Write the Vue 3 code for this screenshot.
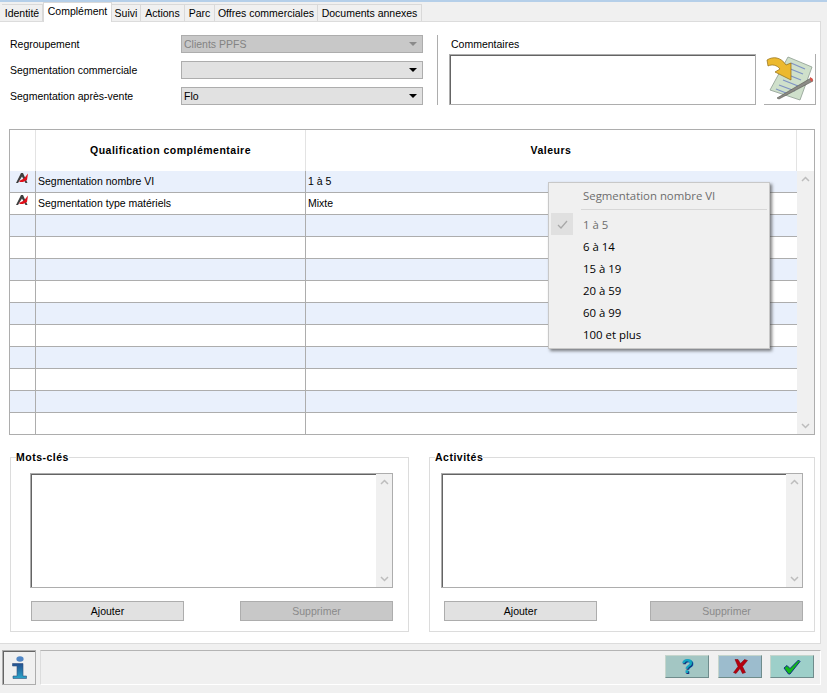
<template>
  <div class="window">
    <div class="tabs">
      <span v-for="tab in tabs" :key="tab.label" class="tab" :class="{ active: tab.active }" :style="{ width: tab.width + 'px' }">{{ tab.label }}</span>
    </div>

    <div class="panel">
      <div class="top">
        <div class="fields">
          <div v-for="f in fields" :key="f.label" class="field">
            <label>{{ f.label }}</label>
            <div class="select" :class="{ disabled: f.disabled }">
              <span>{{ f.value }}</span>
              <i class="caret"></i>
            </div>
          </div>
        </div>
        <div class="comments">
          <div class="comments-label">Commentaires</div>
          <div class="comments-row">
            <div class="inset comments-box"></div>
            <button class="note-btn">
              <svg width="51" height="50" viewBox="0 0 51 50">
                <path d="M24 3 L48 13 L36 46 L6 36 Z" fill="#cfe0cb" stroke="#8d9c90" stroke-width=".8" />
                <path d="M27 9l14 6M24 14l15 6M22 20l15 6M19 26l15 6M15 31l16 6M12 35l10 4" stroke="#7f93c4" stroke-width="1.3" />
                <path d="M3 6 C9 2 17 3 22 11 L27 9 L27 26 L11 18 L16 15 C13 11 8 10 4 12 Z" fill="#ecb92f" stroke="#8f6c14" stroke-width=".7" />
                <path d="M13 44 L47 24 L49 27 L15 45 Z" fill="#8b8b86" stroke="#55554f" stroke-width=".6" />
                <path d="M46 23l3 2-1 3-2-2z" fill="#d9534a" />
              </svg>
            </button>
          </div>
        </div>
      </div>

      <div class="grid">
        <div class="grid-head">
          <div class="cell"></div>
          <div class="cell title">Qualification complémentaire</div>
          <div class="cell title">Valeurs</div>
          <div class="cell corner"></div>
        </div>
        <div class="grid-body">
          <div class="rows">
            <div v-for="(r, i) in rows" :key="i" class="row" :class="{ odd: i % 2 === 0 }">
              <div class="cell icon-cell">
                <svg v-if="r.name" width="14" height="13" viewBox="0 0 14 13">
                  <path d="M1 11 L6 1 L8 1 L12.5 11 L10.5 11 L7 4.5 L3 11 Z" fill="#3f3f3f" />
                  <path d="M4 9 L9 6.5 L13 1.5 L12 8 L8 10 L5 10 Z" fill="#e0101a" />
                </svg>
              </div>
              <div class="cell">{{ r.name }}</div>
              <div class="cell">{{ r.value }}</div>
            </div>
          </div>
          <div class="scrollbar">
            <svg class="chev" width="9" height="6" viewBox="0 0 9 6"><path d="M1 5 L4.5 1.5 L8 5" /></svg>
            <svg class="chev" width="9" height="6" viewBox="0 0 9 6"><path d="M1 1 L4.5 4.5 L8 1" /></svg>
          </div>
        </div>

        <div class="menu">
          <div class="menu-title">Segmentation nombre VI</div>
          <div class="menu-sep"></div>
          <div v-for="(m, i) in menuItems" :key="m" class="menu-item" :class="{ checked: i === 0 }">
            <span class="check">
              <svg v-if="i === 0" width="11" height="9" viewBox="0 0 11 9"><path d="M1 5 L4 8 L10 1" fill="none" stroke="#a8a8a8" stroke-width="1.3" /></svg>
            </span>
            <span>{{ m }}</span>
          </div>
        </div>
      </div>

      <div class="groups">
        <fieldset v-for="g in groups" :key="g.title" class="group" :class="g.cls">
          <legend>{{ g.title }}</legend>
          <div class="inset list">
            <div class="scrollbar list-bar">
              <svg class="chev" width="9" height="6" viewBox="0 0 9 6"><path d="M1 5 L4.5 1.5 L8 5" /></svg>
              <svg class="chev" width="9" height="6" viewBox="0 0 9 6"><path d="M1 1 L4.5 4.5 L8 1" /></svg>
            </div>
          </div>
          <div class="group-actions">
            <button class="btn">Ajouter</button>
            <button class="btn off">Supprimer</button>
          </div>
        </fieldset>
      </div>
    </div>

    <div class="footer">
      <button class="info-btn">
        <svg width="15" height="23" viewBox="0 0 15 23">
          <defs>
            <linearGradient id="infoBody" x1="0" y1="0" x2="0" y2="1">
              <stop offset="0" stop-color="#234f8f" />
              <stop offset="1" stop-color="#2aa5c9" />
            </linearGradient>
          </defs>
          <ellipse cx="8" cy="3" rx="3.6" ry="2.8" fill="#4f86c6" />
          <path d="M.5 7.5 H11 V20 H14.5 V22.5 H1 V20 H5 V10 H.5 Z" fill="url(#infoBody)" stroke="#34507c" stroke-width=".6" />
        </svg>
      </button>
      <div class="status">
        <button class="act help">?</button>
        <button class="act cancel">
          <svg width="15" height="15" viewBox="0 0 15 15"><path d="M2 .5 L5 .5 L7.5 4.5 L11.5 .5 L14.5 1.5 L9.5 7.5 L12.5 13.5 L9.5 14.5 L7 9.5 L3 14.5 L.5 13.5 L5 7.5 Z" fill="#b5000f" stroke="#7d0008" stroke-width=".5" /></svg>
        </button>
        <button class="act ok">
          <svg width="18" height="16" viewBox="0 0 18 16"><path d="M1 9 L4 6.5 L7 9.5 L15.5 1 L17 2.5 L7 15 L5.5 15 Z" fill="#12b81a" stroke="#0a1f8c" stroke-width=".9" /></svg>
        </button>
      </div>
    </div>
  </div>
</template>

<script setup>
const tabs = [
  { label: "Identité", width: 41 },
  { label: "Complément", width: 69, active: true },
  { label: "Suivi", width: 29 },
  { label: "Actions", width: 44 },
  { label: "Parc", width: 30 },
  { label: "Offres commerciales", width: 103 },
  { label: "Documents annexes", width: 104 },
];

const fields = [
  { label: "Regroupement", value: "Clients PPFS", disabled: true },
  { label: "Segmentation commerciale", value: "" },
  { label: "Segmentation après-vente", value: "Flo" },
];

const rows = Array.from({ length: 12 }, () => ({ name: "", value: "" }));
rows[0] = { name: "Segmentation nombre VI", value: "1 à 5" };
rows[1] = { name: "Segmentation type matériels", value: "Mixte" };

const menuItems = ["1 à 5", "6 à 14", "15 à 19", "20 à 59", "60 à 99", "100 et plus"];

const groups = [
  { title: "Mots-clés", cls: "left" },
  { title: "Activités", cls: "right" },
];
</script>

<style>
html,
body {
  margin: 0;
  background: #f0f0f0;
}
</style>

<style scoped>
.window {
  width: 827px;
  height: 693px;
  overflow: hidden;
  background: #f0f0f0;
  border-top: 2px solid #b5cfe9;
  box-sizing: border-box;
  font-family: "Liberation Sans", Arial, sans-serif;
  font-size: 10.5px;
  color: #000;
}

button {
  font: inherit;
  padding: 0;
  cursor: pointer;
}

.tabs {
  display: flex;
  height: 19px;
  padding-left: 2px;
  align-items: flex-end;
}

.tab {
  height: 17px;
  line-height: 17px;
  text-align: center;
  box-sizing: border-box;
  border: 1px solid #d9d9d9;
  border-left: 0;
  border-bottom: 0;
  white-space: nowrap;
}

.tab.active {
  height: 20px;
  line-height: 17px;
  background: #fff;
  border-left: 1px solid #d9d9d9;
  margin-bottom: -1px;
  position: relative;
  z-index: 1;
}

.panel {
  width: 821px;
  height: 623px;
  box-sizing: border-box;
  background: #fff;
  border: 1px solid #dcdcdc;
  border-left: 0;
}

.top {
  display: flex;
  padding: 13px 0 0 10px;
  height: 107px;
  box-sizing: border-box;
}

.fields {
  width: 413px;
  display: flex;
  flex-direction: column;
  gap: 8px;
  margin-right: 14px;
}

.field {
  display: flex;
  align-items: center;
  height: 18px;
}

.field label {
  width: 171px;
}

.select {
  flex: 1;
  height: 18px;
  box-sizing: border-box;
  background: #e1e1e1;
  border: 1px solid #adadad;
  display: flex;
  align-items: center;
  justify-content: space-between;
  padding: 0 5px 0 2px;
}

.select.disabled {
  background: #c8c8c8;
  color: #838383;
}

.caret {
  width: 0;
  height: 0;
  border-left: 4px solid transparent;
  border-right: 4px solid transparent;
  border-top: 4px solid #000;
}

.select.disabled .caret {
  border-top-color: #8a8a8a;
}

.comments {
  border-left: 1px solid #adadad;
  height: 70px;
  padding-left: 11px;
}

.comments-label {
  height: 19px;
  line-height: 18px;
  padding-left: 2px;
}

.comments-row {
  display: flex;
  gap: 8px;
}

.inset {
  box-sizing: border-box;
  background: #fff;
  border: 1px solid #adadad;
  box-shadow: inset 1px 1px 0 #646464;
}

.comments-box {
  width: 307px;
  height: 51px;
}

.note-btn {
  width: 52px;
  height: 51px;
  box-sizing: border-box;
  background: #fff;
  border: 0;
  border-right: 1px solid #adadad;
  border-bottom: 1px solid #adadad;
  display: flex;
  align-items: center;
  justify-content: center;
}

.grid {
  position: relative;
  margin: 0 0 0 9px;
  width: 806px;
  box-sizing: border-box;
  border: 1px solid #adadad;
}

.grid-head {
  display: grid;
  grid-template-columns: 26px 270px 491px 17px;
  height: 41px;
}

.grid-head .cell {
  border-right: 1px solid #e3e3e3;
}

.cell.title {
  font-weight: 700;
  text-align: center;
  line-height: 41px;
  letter-spacing: .5px;
}

.cell.corner {
  border-right: 0;
}

.grid-body {
  display: flex;
}

.rows {
  width: 787px;
}

.row {
  display: grid;
  grid-template-columns: 26px 270px 491px;
  height: 22px;
  box-sizing: border-box;
  border-bottom: 1px solid #adadad;
}

.row:last-child {
  height: 21px;
  border-bottom: 0;
}

.row.odd {
  background: #e9f0fc;
}

.row .cell {
  border-right: 1px solid #adadad;
  line-height: 21px;
  padding-left: 2px;
  box-sizing: border-box;
}

.row .cell:last-child {
  border-right: 0;
}

.icon-cell svg {
  display: block;
  margin: 1px 0 0 3px;
}

.scrollbar {
  width: 17px;
  background: #f0f0f0;
  display: flex;
  flex-direction: column;
  justify-content: space-between;
  align-items: center;
  padding: 5px 0;
  box-sizing: border-box;
}

.chev {
  fill: none;
  stroke: #bdbdbd;
  stroke-width: 1.5;
}

.menu {
  position: absolute;
  left: 538px;
  top: 52px;
  width: 222px;
  height: 167px;
  box-sizing: border-box;
  background: #f0f0f0;
  border: 1px solid #c8c8c8;
  box-shadow: 2px 2px 3px rgba(60, 60, 60, .65);
  padding: 2px;
  font-family: "Open Sans", "Noto Sans", sans-serif;
  font-size: 11.4px;
  z-index: 2;
}

.menu-title {
  height: 22px;
  line-height: 22px;
  padding-left: 32px;
  color: #6d6d6d;
}

.menu-sep {
  height: 1px;
  margin: 2px 0 3px 30px;
  background: #d7d7d7;
}

.menu-item {
  height: 22px;
  display: flex;
  align-items: center;
}

.menu-item.checked {
  color: #6d6d6d;
}

.check {
  width: 22px;
  height: 22px;
  margin-right: 10px;
  display: flex;
  align-items: center;
  justify-content: center;
}

.menu-item.checked .check {
  background: #e0e0e0;
}

.groups {
  display: flex;
  margin-top: 16px;
  padding-left: 10px;
}

.group {
  margin: 0;
  min-width: 0;
  height: 181px;
  box-sizing: border-box;
  border: 1px solid #dcdcdc;
  padding: 0;
}

.group legend {
  padding: 0;
  font-weight: 700;
  line-height: 13px;
  margin-left: 5px;
  background: #fff;
  letter-spacing: .5px;
}

.group.left {
  width: 399px;
  margin-right: 20px;
}

.group.right {
  width: 386px;
}

.list {
  height: 115px;
  display: flex;
  justify-content: flex-end;
  margin-top: 9px;
}

.left .list {
  width: 363px;
  margin-left: 19px;
}

.right .list {
  width: 362px;
  margin-left: 11px;
}

.list-bar {
  width: 16px;
  height: 100%;
}

.group-actions {
  display: flex;
  justify-content: space-between;
  margin-top: 13px;
}

.left .group-actions {
  width: 362px;
  margin-left: 20px;
}

.right .group-actions {
  width: 359px;
  margin-left: 14px;
}

.btn {
  width: 153px;
  height: 20px;
  box-sizing: border-box;
  background: #e1e1e1;
  border: 1px solid #adadad;
  color: #000;
}

.btn.off {
  background: #c8c8c8;
  color: #8a8a8a;
}

.footer {
  display: flex;
  gap: 4px;
  padding: 6px 0 0 2px;
  width: 821px;
  box-sizing: border-box;
}

.info-btn {
  width: 34px;
  height: 35px;
  box-sizing: border-box;
  background: #f0f0f0;
  border: 1px solid #adadad;
  box-shadow: inset 1px 1px 0 #646464;
  display: flex;
  align-items: center;
  justify-content: center;
}

.status {
  flex: 1;
  height: 35px;
  box-sizing: border-box;
  border-top: 1px solid #b4b4b4;
  border-left: 1px solid #dcdcdc;
  border-right: 1px solid #fff;
  border-bottom: 1px solid #fff;
  display: flex;
  justify-content: flex-end;
  gap: 8px;
  padding: 4px 6px 0 0;
}

.act {
  width: 44px;
  height: 23px;
  box-sizing: border-box;
  border: 1px solid;
  border-color: #c5d5cc #6f8c8c #6f8c8c #c5d5cc;
  display: flex;
  align-items: center;
  justify-content: center;
}

.help {
  background: #a3c6c3;
  color: #12a5c4;
  font-family: "Liberation Sans", Arial, sans-serif;
  font-size: 20px;
  font-weight: 700;
  text-shadow: 1px 1px 0 #14307a;
  margin-right: 1px;
}

.cancel {
  background: #9cbccd;
}

.ok {
  background: #9dcfc9;
}
</style>
